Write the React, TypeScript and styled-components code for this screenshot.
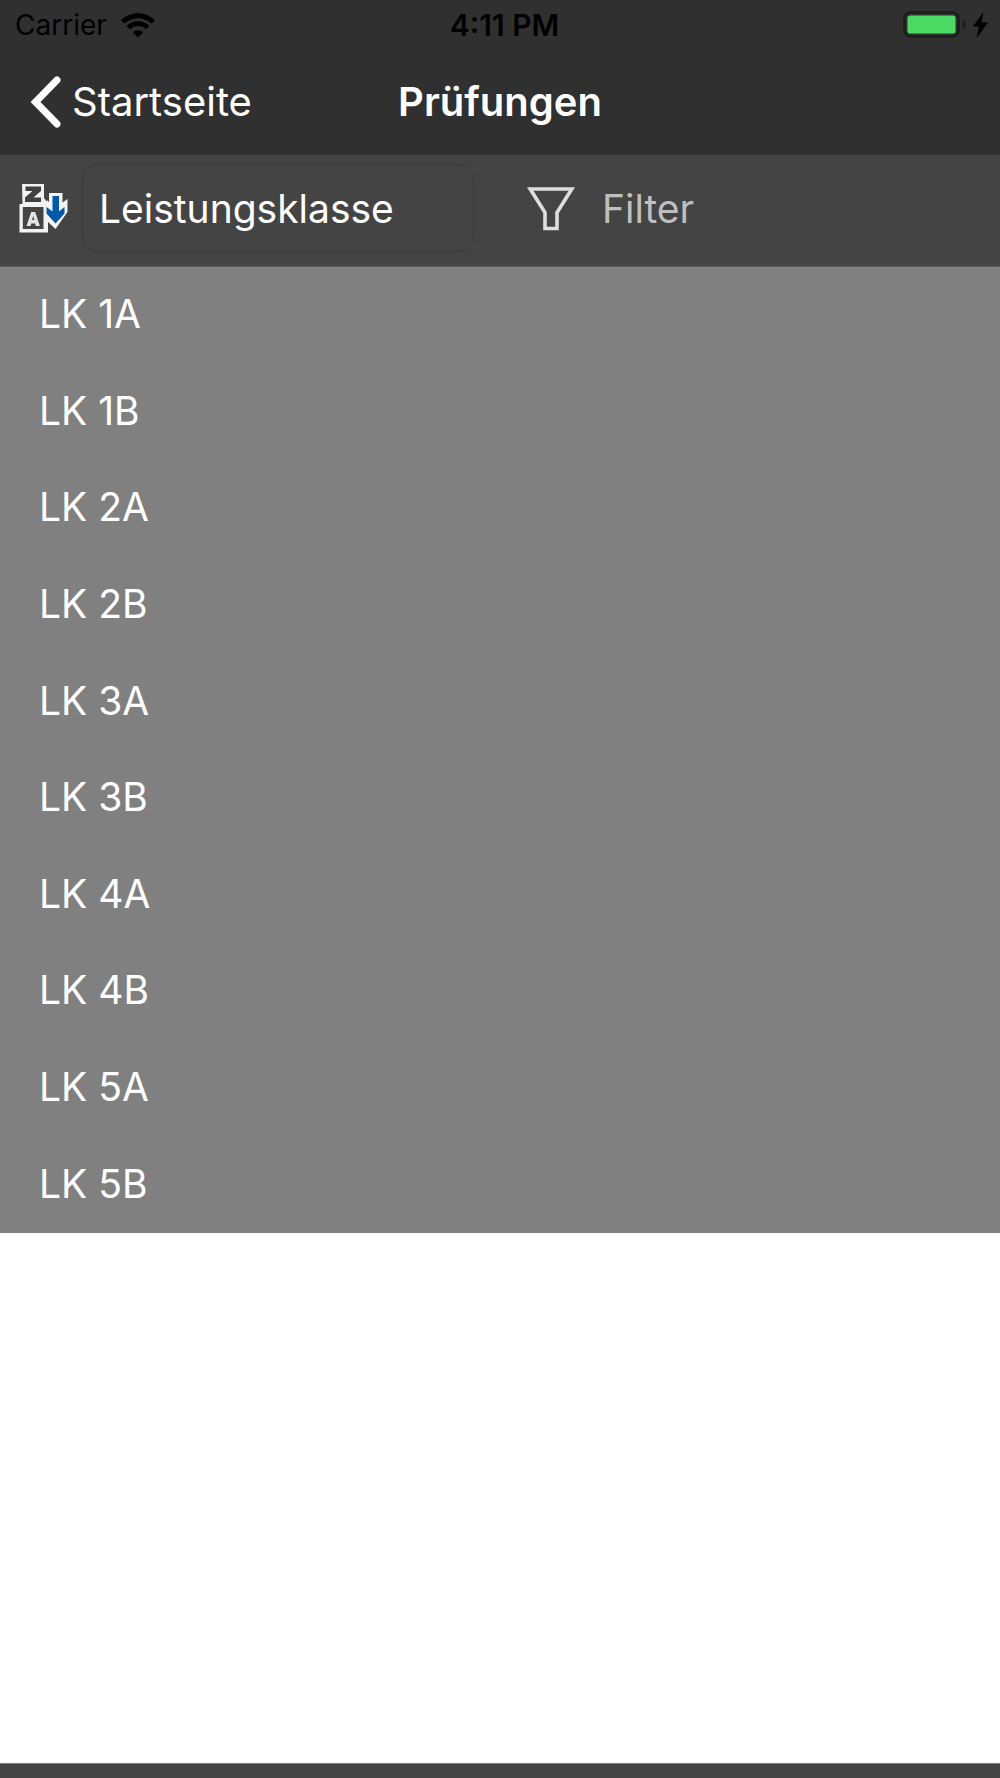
import React, { useState } from "react";
import styled, { createGlobalStyle } from "styled-components";

const GlobalStyle = createGlobalStyle`
  *, *::before, *::after { box-sizing: border-box; }
  body {
    margin: 0;
    background: #ffffff;
    font-family: Inter, "Liberation Sans", sans-serif;
  }
  button, select { font: inherit; color: inherit; }
  svg { display: block; flex: none; }
`;

const Screen = styled.div`
  display: flex;
  flex-direction: column;
  min-height: 100vh;
  font-size: 39px;
  line-height: 48px;
  color: #ffffff;
`;

const StatusBar = styled.div`
  display: grid;
  grid-template-columns: 1fr auto 1fr;
  align-items: center;
  height: 50px;
  padding: 0 12px 0 15px;
  background: #303030;
  color: #000000;
  font-size: 28px;
  line-height: 34px;
`;

const StatusGroup = styled.div<{ $end?: boolean; $gap: number }>`
  display: flex;
  align-items: center;
  justify-content: ${(p) => (p.$end ? "flex-end" : "flex-start")};
  gap: ${(p) => p.$gap}px;
`;

const Clock = styled.time`
  font-size: 30px;
  font-weight: 600;
  padding-left: 6px;
`;

const NavBar = styled.header`
  display: grid;
  grid-template-columns: 1fr auto 1fr;
  align-items: center;
  height: 105px;
  padding: 0 30px 2px;
  background: #303030;
  font-size: 40px;
`;

const BackButton = styled.button`
  display: flex;
  align-items: center;
  justify-self: start;
  gap: 10px;
  padding: 0;
  border: 0;
  background: none;
`;

const Title = styled.h1`
  margin: 0;
  font-size: inherit;
  font-weight: 600;
`;

const Toolbar = styled.div`
  display: flex;
  align-items: center;
  height: 112px;
  padding: 0 18px 6px;
  background: #444444;
  border-top: 1px solid #484848;
  border-bottom: 1px solid #5c5c5c;
`;

const SortField = styled.label`
  display: flex;
  align-items: center;
  flex: 0 1 456px;
  gap: 14px;
`;

const SortSelect = styled.select`
  appearance: none;
  flex: 1;
  min-width: 0;
  height: 88px;
  padding: 2px 16px 0;
  border: 1px solid #3a3a3a;
  border-radius: 14px;
  background: #444444;
`;

const FilterButton = styled.button`
  display: flex;
  align-items: center;
  gap: 26px;
  margin-left: 52px;
  padding: 2px 0 0;
  border: 0;
  background: none;
  color: #bfbfbf;
`;

const ClassList = styled.ul`
  display: grid;
  grid-auto-rows: 1fr;
  min-height: 966px;
  margin: 0;
  padding: 0;
  list-style: none;
  background: #808080;
`;

const ClassRow = styled.li`
  display: flex;
  align-items: center;
  padding: 0 39px 2px;
`;

const BottomBar = styled.footer`
  height: 15px;
  margin-top: auto;
  background: #444444;
  border-top: 1px solid #808080;
`;

const WifiIcon = () => (
  <svg width="34" height="25" viewBox="0 0 34 25" aria-hidden="true">
    <path d="M0 7.200C9.500-2 24.500-2 34 7.200l-3.400 3.500c-7.600-7.400-19.600-7.400-27.200 0z" />
    <path d="M5.600 13c6.300-6.200 16.500-6.200 22.800 0L25 16.400c-4.500-4.400-11.500-4.400-16 0z" />
    <path d="M17 24.500l-5.200-5.300a7.600 7.600 0 0 1 10.400 0z" />
  </svg>
);

const BatteryIcon = () => (
  <svg width="63" height="28" viewBox="0 0 63 28" aria-hidden="true">
    <rect x="1.500" y="1.500" width="54" height="24" rx="6" fill="none" stroke="#1d1d1d" strokeWidth="2.600" />
    <rect x="4.500" y="4.500" width="48" height="18" rx="2.500" fill="#4cd964" />
    <path d="M59.500 8.500c4 2 4 8.500 0 10.500z" fill="#1d1d1d" />
  </svg>
);

const BoltIcon = () => (
  <svg width="15" height="26" viewBox="0 0 15 26" aria-hidden="true">
    <path d="M10.500 0L0 14.500h6L3.500 26 15 10.500H8.700z" fill="#000" />
  </svg>
);

const BackIcon = () => (
  <svg width="32" height="52" viewBox="0 0 32 52" fill="none" stroke="#fff" strokeWidth="7" strokeLinecap="round" aria-hidden="true">
    <path d="M27 4L5.500 26 27 48" />
  </svg>
);

const SortIcon = () => (
  <svg width="50" height="50" viewBox="0 0 50 50" aria-hidden="true">
    <path d="M4 1H26v14l4 5v29.500H1.500V21H4.500z" fill="#f2f2f2" />
    <path d="M31 10h13.500v9.500l5-3.500v13L37.500 46 29 38V17l2 2z" fill="#f2f2f2" />
    <path d="M7.500 3.500h15.500v4.500L15.500 14.500H23v4.500H7v-4.500L14.500 8h-7z" fill="#404040" />
    <rect x="4.800" y="24" width="20.700" height="22" fill="#444" />
    <path d="M8.500 43l4.700-14h4l4.700 14h-4.200l-.7-2.500h-3.700l-.7 2.500zM14 37h2.400L15.200 33z" fill="#e4e4e4" fillRule="evenodd" />
    <path d="M34.500 13h6.500v15.500l5.500-4.500v6.500l-9 10-9-10v-6.500l6 4.500z" fill="#0058a6" />
  </svg>
);

const FilterIcon = () => (
  <svg width="50" height="46" viewBox="0 0 50 46" fill="none" stroke="#dedede" strokeWidth="3.600" aria-hidden="true">
    <path d="M4.200 3H45.800L31 26.500v16h-12v-16z" />
  </svg>
);

const classes = ["1A", "1B", "2A", "2B", "3A", "3B", "4A", "4B", "5A", "5B"];

export default function App() {
  const [sortBy, setSortBy] = useState("Leistungsklasse");

  return (
    <Screen>
      <GlobalStyle />
      <StatusBar>
        <StatusGroup $gap={14}>
          <span>Carrier</span>
          <WifiIcon />
        </StatusGroup>
        <Clock>4:11 PM</Clock>
        <StatusGroup $end $gap={7}>
          <BatteryIcon />
          <BoltIcon />
        </StatusGroup>
      </StatusBar>
      <NavBar>
        <BackButton type="button">
          <BackIcon />
          Startseite
        </BackButton>
        <Title>Prüfungen</Title>
      </NavBar>
      <Toolbar>
        <SortField>
          <SortIcon />
          <SortSelect aria-label="Sortierung" value={sortBy} onChange={(e) => setSortBy(e.target.value)}>
            <option>Leistungsklasse</option>
          </SortSelect>
        </SortField>
        <FilterButton type="button">
          <FilterIcon />
          Filter
        </FilterButton>
      </Toolbar>
      <ClassList>
        {classes.map((name) => (
          <ClassRow key={name}>LK {name}</ClassRow>
        ))}
      </ClassList>
      <BottomBar />
    </Screen>
  );
}
